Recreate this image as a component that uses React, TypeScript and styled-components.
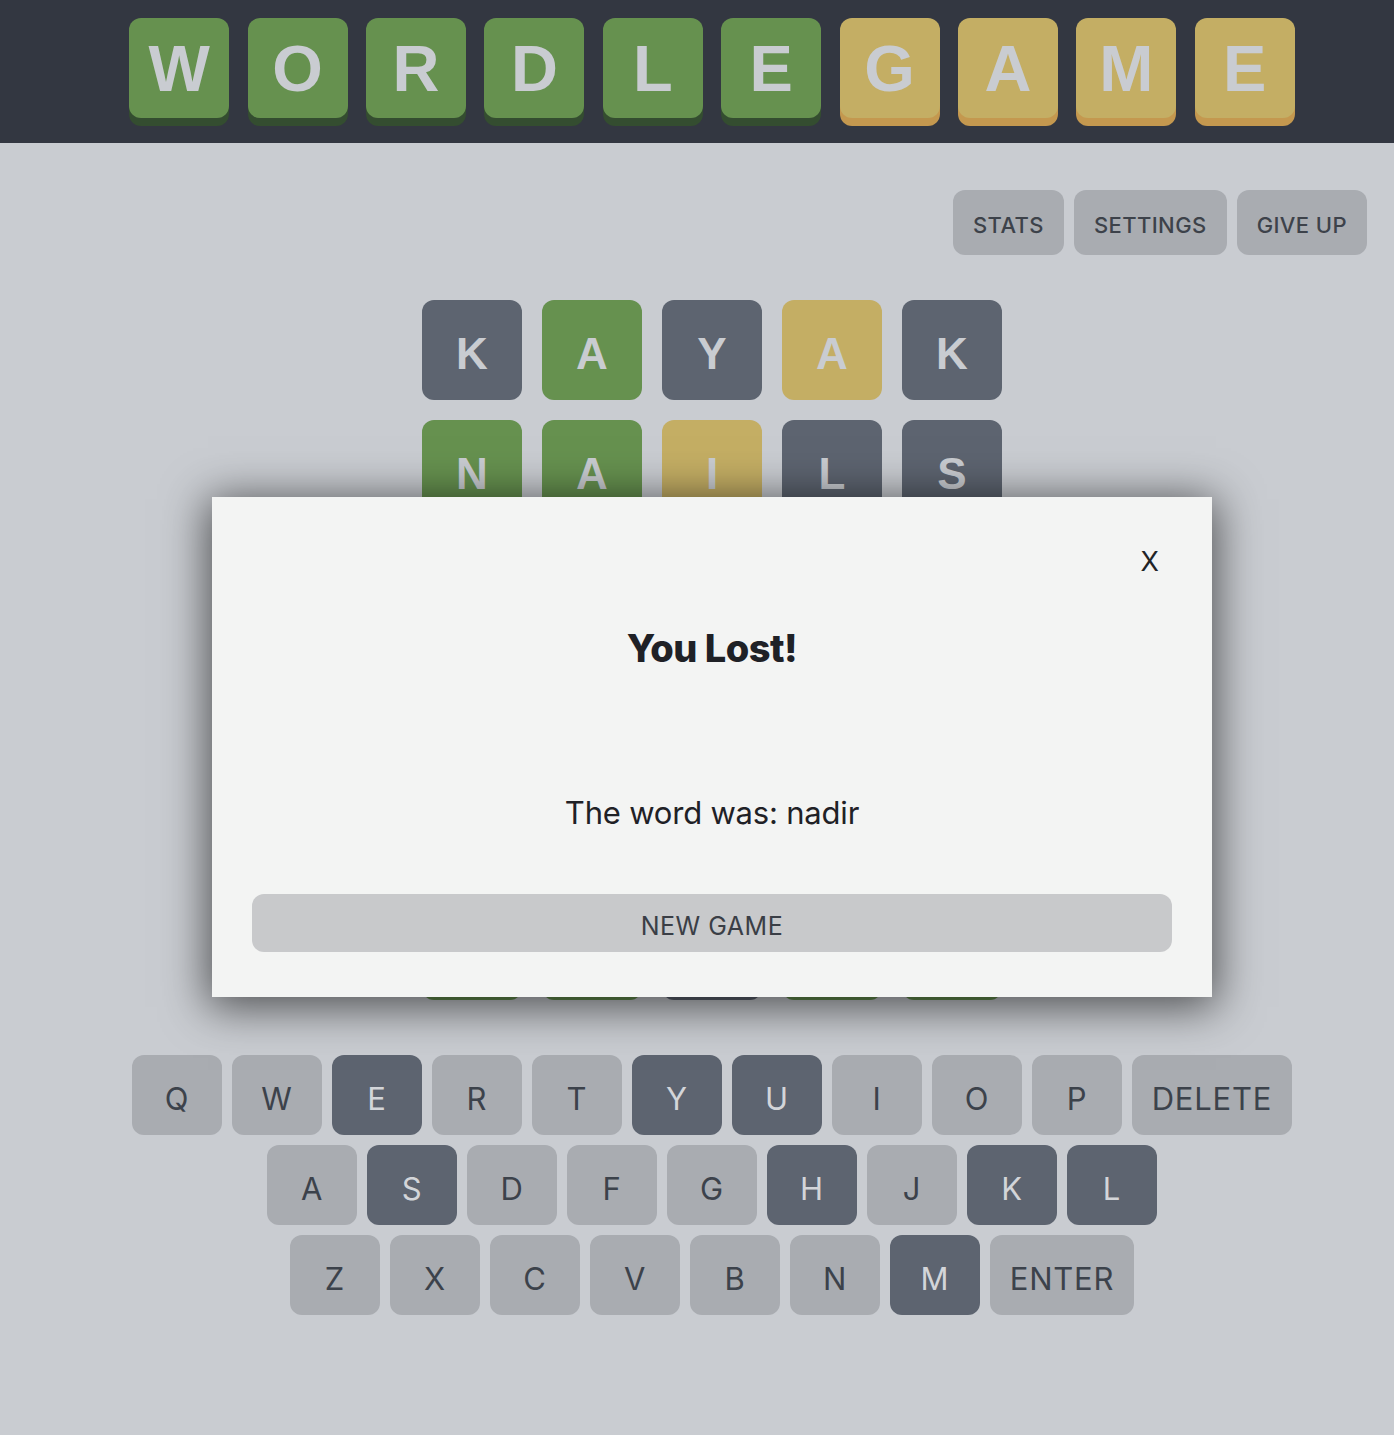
import React from "react";
import styled, { createGlobalStyle, css } from "styled-components";

const GlobalStyle = createGlobalStyle`
  html, body { margin: 0; padding: 0; }
  body {
    background: #c9ccd1;
    font-family: Inter, "Noto Sans", "Liberation Sans", sans-serif;
    overflow: hidden;
  }
  * { box-sizing: border-box; }
`;

type TileColor = "green" | "yellow" | "gray";

const tileBg: Record<TileColor, string> = {
  green: "#66914f",
  yellow: "#c4ae64",
  gray: "#5d6470",
};
const tileEdge: Record<TileColor, string> = {
  green: "#344d30",
  yellow: "#c4984f",
  gray: "#3f444d",
};

const Page = styled.div`
  min-height: 1435px;
  display: flex;
  flex-direction: column;
`;

const Header = styled.header`
  height: 143px;
  background: #333741;
  display: flex;
  justify-content: center;
  padding: 18px 0 0 30px;
`;

const TitleRow = styled.div`
  display: flex;
  gap: 18.4px;
`;

const HeaderTile = styled.div<{ $color: TileColor }>`
  width: 100px;
  height: 100px;
  border-radius: 12px;
  background: ${(p) => tileBg[p.$color]};
  box-shadow: 0 8px 0 ${(p) => tileEdge[p.$color]};
  color: #c9ccd1;
  font-family: "Liberation Sans", Arial, sans-serif;
  font-weight: 700;
  font-size: 65px;
  display: flex;
  align-items: center;
  justify-content: center;
`;

const Main = styled.main`
  padding-left: 30px;
  display: flex;
  flex-direction: column;
  align-items: center;
`;

const Toolbar = styled.div`
  align-self: stretch;
  display: flex;
  justify-content: flex-end;
  gap: 10px;
  padding: 47px 27px 0 0;
`;

const ToolButton = styled.button`
  height: 65px;
  padding: 4px 20px 0;
  border: none;
  border-radius: 12px;
  background: #a9acb1;
  color: #3d424a;
  font-family: Inter, "Liberation Sans", sans-serif;
  font-weight: 500;
  font-size: 22px;
  letter-spacing: 0.4px;
`;

const Board = styled.div`
  margin-top: 45px;
  display: grid;
  grid-template-columns: repeat(5, 100px);
  grid-auto-rows: 100px;
  gap: 20px;
`;

const BoardTile = styled.div<{ $color: TileColor }>`
  border-radius: 12px;
  background: ${(p) => tileBg[p.$color]};
  color: #c9ccd1;
  font-family: "Liberation Sans", Arial, sans-serif;
  font-weight: 700;
  font-size: 44px;
  display: flex;
  align-items: center;
  justify-content: center;
  padding-top: 8px;
`;

const Keyboard = styled.div`
  margin-top: 55px;
  display: flex;
  flex-direction: column;
  align-items: center;
  gap: 10px;
`;

const KeyRow = styled.div`
  display: flex;
  gap: 10px;
`;

const Key = styled.button<{ $dark?: boolean; $width?: number }>`
  width: ${(p) => p.$width ?? 90}px;
  height: 80px;
  border: none;
  border-radius: 12px;
  font-family: Inter, "Liberation Sans", sans-serif;
  font-size: 31px;
  letter-spacing: 0.8px;
  padding: 6px 0 0;
  ${(p) =>
    p.$dark
      ? css`
          background: #5d6470;
          color: #d3d5d9;
        `
      : css`
          background: #a9acb1;
          color: #3c424b;
        `}
`;

const Modal = styled.div`
  position: absolute;
  left: 212px;
  top: 497px;
  width: 1000px;
  height: 500px;
  background: #f3f4f3;
  box-shadow: 0 6px 42px 4px rgba(0, 0, 0, 0.62);
  padding: 40px 40px 45px;
  display: flex;
  flex-direction: column;
  align-items: stretch;
`;

const CloseRow = styled.div`
  height: 48px;
  display: flex;
  justify-content: flex-end;
  align-items: center;
`;

const CloseButton = styled.button`
  border: none;
  background: none;
  padding: 0 13px 0 0;
  font-family: Inter, "Liberation Sans", sans-serif;
  font-size: 27px;
  color: #222326;
  line-height: 1;
`;

const ModalTitle = styled.h2`
  margin: 40px 0 0;
  height: 46px;
  line-height: 46px;
  text-align: center;
  font-family: Inter, "Liberation Sans", sans-serif;
  font-weight: 800;
  font-size: 38px;
  letter-spacing: -0.5px;
  color: #1f2126;
`;

const ModalMessage = styled.p`
  margin: 122px 0 0;
  height: 40px;
  line-height: 40px;
  text-align: center;
  font-family: Inter, "Liberation Sans", sans-serif;
  font-size: 31px;
  letter-spacing: -0.2px;
  color: #1f2126;
`;

const NewGameButton = styled.button`
  margin-top: 61px;
  height: 58px;
  border: none;
  border-radius: 12px;
  background: #c8c9cb;
  color: #3a3e46;
  font-family: Inter, "Liberation Sans", sans-serif;
  font-size: 25px;
  letter-spacing: 0.5px;
  padding-top: 6px;
`;

const title: [string, TileColor][] = [
  ["W", "green"],
  ["O", "green"],
  ["R", "green"],
  ["D", "green"],
  ["L", "green"],
  ["E", "green"],
  ["G", "yellow"],
  ["A", "yellow"],
  ["M", "yellow"],
  ["E", "yellow"],
];

// Rows 3-6 lie under the dialog; only their colours show at its lower edge.
const guesses: [string, TileColor][][] = [
  [["K", "gray"], ["A", "green"], ["Y", "gray"], ["A", "yellow"], ["K", "gray"]],
  [["N", "green"], ["A", "green"], ["I", "yellow"], ["L", "gray"], ["S", "gray"]],
  [["", "green"], ["", "green"], ["", "gray"], ["", "gray"], ["", "yellow"]],
  [["", "green"], ["", "green"], ["", "gray"], ["", "gray"], ["", "green"]],
  [["", "green"], ["", "green"], ["", "gray"], ["", "gray"], ["", "gray"]],
  [["", "green"], ["", "green"], ["", "gray"], ["", "green"], ["", "green"]],
];

const darkKeys = new Set(["E", "Y", "U", "S", "H", "K", "L", "M"]);

const rows: { label: string; width?: number }[][] = [
  [..."QWERTYUIOP"].map((l) => ({ label: l })).concat([{ label: "DELETE", width: 160 }]),
  [..."ASDFGHJKL"].map((l) => ({ label: l })),
  [..."ZXCVBNM"].map((l) => ({ label: l })).concat([{ label: "ENTER", width: 144 }]),
];

export default function App() {
  return (
    <Page>
      <GlobalStyle />
      <Header>
        <TitleRow>
          {title.map(([l, c], i) => (
            <HeaderTile key={i} $color={c}>
              {l}
            </HeaderTile>
          ))}
        </TitleRow>
      </Header>
      <Main>
        <Toolbar>
          <ToolButton>STATS</ToolButton>
          <ToolButton>SETTINGS</ToolButton>
          <ToolButton>GIVE UP</ToolButton>
        </Toolbar>
        <Board>
          {guesses.flatMap((row, r) =>
            row.map(([l, c], i) => (
              <BoardTile key={`${r}-${i}`} $color={c}>
                {l}
              </BoardTile>
            ))
          )}
        </Board>
        <Keyboard>
          {rows.map((row, r) => (
            <KeyRow key={r}>
              {row.map((k) => (
                <Key key={k.label} $width={k.width} $dark={darkKeys.has(k.label)}>
                  {k.label}
                </Key>
              ))}
            </KeyRow>
          ))}
        </Keyboard>
      </Main>
      <Modal>
        <CloseRow>
          <CloseButton>X</CloseButton>
        </CloseRow>
        <ModalTitle>You Lost!</ModalTitle>
        <ModalMessage>The word was: nadir</ModalMessage>
        <NewGameButton>NEW GAME</NewGameButton>
      </Modal>
    </Page>
  );
}
